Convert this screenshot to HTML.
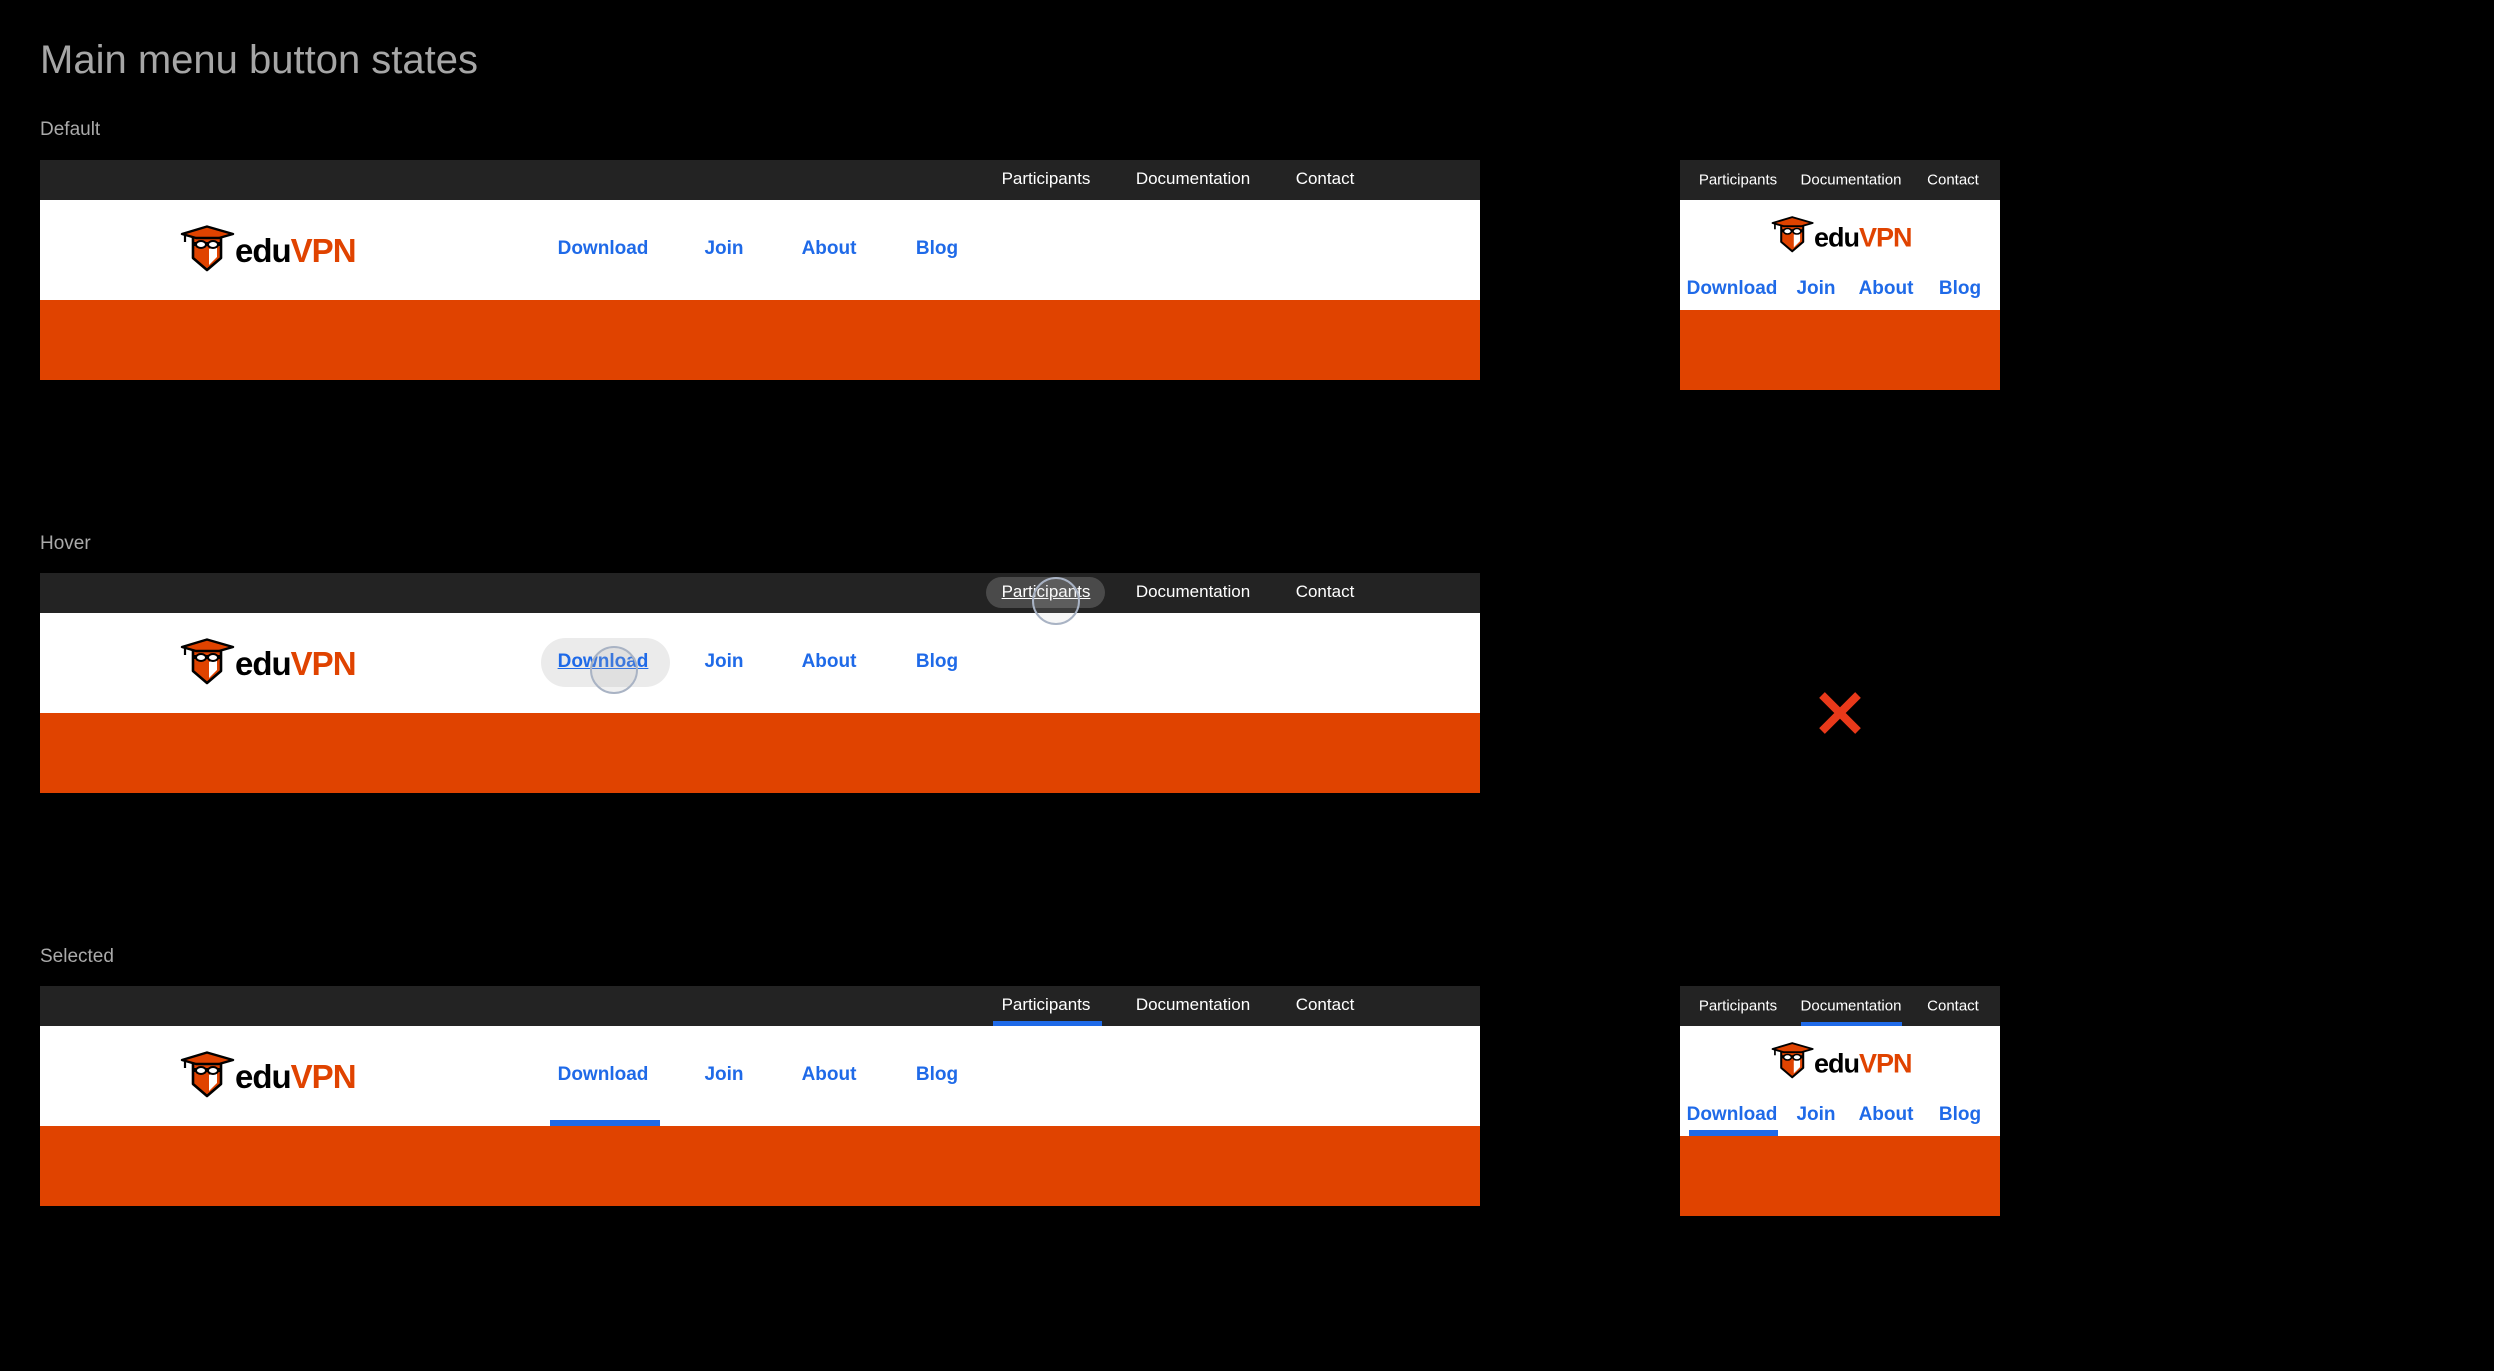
<!DOCTYPE html>
<html><head><meta charset="utf-8"><style>
*{margin:0;padding:0;box-sizing:border-box}
body{width:2494px;height:1371px;background:#000;position:relative;overflow:hidden;font-family:"Liberation Sans",sans-serif}
.a{position:absolute}
.t{position:absolute;transform:translate(-50%,-50%);white-space:nowrap}
.top{color:#fff;font-size:17px}
.nav{color:#1f6ae8;font-weight:bold;font-size:19px}
.lbl{color:#aaa;font-size:19px;left:40px}
.logo{position:absolute;width:56px;height:48px}
.word{position:absolute;font-weight:bold;font-size:33px;letter-spacing:-1px;transform:translateY(-50%)}
.word span{color:#e04300}
</style></head><body>
<svg width="0" height="0" style="position:absolute"><defs>
<g id="ic">
<path d="M13 11 L41 11 L41 33 L27 45 L13 33 Z" fill="#e04300" stroke="#000" stroke-width="2.6" stroke-linejoin="round"/>
<path d="M29 24 L37 21 L37 32 L29 40 Z" fill="#fff"/>
<path d="M2 9 L27 1.5 L53 9 L39 13 L16 13 Z" fill="#e04300" stroke="#000" stroke-width="2.4" stroke-linejoin="round"/>
<path d="M5 9 L5 17" stroke="#000" stroke-width="2.2"/>
<path d="M13 17 L41 17 L41 21 L13 21Z" fill="#000"/>
<ellipse cx="21" cy="19.5" rx="5" ry="3.5" fill="#fff" stroke="#000" stroke-width="2"/>
<ellipse cx="33" cy="19.5" rx="5" ry="3.5" fill="#fff" stroke="#000" stroke-width="2"/>
</g></defs></svg>

<div class="a" style="left:40px;top:38px;color:#a6a6a6;font-size:40px">Main menu button states</div>
<div class="a lbl" style="top:119px">Default</div>
<div class="a lbl" style="top:533px">Hover</div>
<div class="a lbl" style="top:946px">Selected</div>

<!-- Banner 1 -->
<div class="a" style="left:40px;top:160px;width:1440px;height:40px;background:#232323"></div>
<div class="a" style="left:40px;top:200px;width:1440px;height:100px;background:#fff"></div>
<div class="a" style="left:40px;top:300px;width:1440px;height:80px;background:#e04300"></div>
<div class="t top" style="left:1046px;top:179px">Participants</div>
<div class="t top" style="left:1193px;top:179px">Documentation</div>
<div class="t top" style="left:1325px;top:179px">Contact</div>
<svg class="logo" style="left:180px;top:224px" viewBox="0 0 56 46"><use href="#ic"/></svg>
<div class="word" style="left:235px;top:251px">edu<span>VPN</span></div>
<div class="t nav" style="left:603px;top:249px">Download</div>
<div class="t nav" style="left:724px;top:249px">Join</div>
<div class="t nav" style="left:829px;top:249px">About</div>
<div class="t nav" style="left:937px;top:249px">Blog</div>

<!-- Banner 2 hover -->
<div class="a" style="left:40px;top:573px;width:1440px;height:40px;background:#232323"></div>
<div class="a" style="left:40px;top:613px;width:1440px;height:100px;background:#fff"></div>
<div class="a" style="left:40px;top:713px;width:1440px;height:80px;background:#e04300"></div>
<div class="a" style="left:986px;top:577px;width:119px;height:31px;border-radius:16px;background:#4a4a4a"></div>
<div class="a" style="left:541px;top:638px;width:129px;height:49px;border-radius:25px;background:#ebebeb"></div>
<div class="t top" style="left:1046px;top:592px;text-decoration:underline">Participants</div>
<div class="t top" style="left:1193px;top:592px">Documentation</div>
<div class="t top" style="left:1325px;top:592px">Contact</div>
<svg class="logo" style="left:180px;top:637px" viewBox="0 0 56 46"><use href="#ic"/></svg>
<div class="word" style="left:235px;top:664px">edu<span>VPN</span></div>
<div class="t nav" style="left:603px;top:662px;text-decoration:underline">Download</div>
<div class="t nav" style="left:724px;top:662px">Join</div>
<div class="t nav" style="left:829px;top:662px">About</div>
<div class="t nav" style="left:937px;top:662px">Blog</div>
<div class="a" style="left:1032px;top:577px;width:48px;height:48px;border-radius:50%;border:2px solid #a9b3c4;background:rgba(200,200,200,0.15)"></div>
<div class="a" style="left:590px;top:646px;width:48px;height:48px;border-radius:50%;border:2px solid #a9b3c4;background:rgba(180,180,180,0.2)"></div>
<svg class="a" style="left:1818px;top:691px" width="44" height="44" viewBox="0 0 44 44"><path d="M4 4 L40 40 M40 4 L4 40" stroke="#e8391a" stroke-width="8"/></svg>

<!-- Banner 3 selected -->
<div class="a" style="left:40px;top:986px;width:1440px;height:40px;background:#232323"></div>
<div class="a" style="left:40px;top:1026px;width:1440px;height:100px;background:#fff"></div>
<div class="a" style="left:40px;top:1126px;width:1440px;height:80px;background:#e04300"></div>
<div class="a" style="left:993px;top:1021px;width:109px;height:5px;background:#1f6ae8"></div>
<div class="a" style="left:550px;top:1120px;width:110px;height:6px;background:#1f6ae8"></div>
<div class="t top" style="left:1046px;top:1005px">Participants</div>
<div class="t top" style="left:1193px;top:1005px">Documentation</div>
<div class="t top" style="left:1325px;top:1005px">Contact</div>
<svg class="logo" style="left:180px;top:1050px" viewBox="0 0 56 46"><use href="#ic"/></svg>
<div class="word" style="left:235px;top:1077px">edu<span>VPN</span></div>
<div class="t nav" style="left:603px;top:1075px">Download</div>
<div class="t nav" style="left:724px;top:1075px">Join</div>
<div class="t nav" style="left:829px;top:1075px">About</div>
<div class="t nav" style="left:937px;top:1075px">Blog</div>

<!-- Mobile 1 -->
<div class="a" style="left:1680px;top:160px;width:320px;height:40px;background:#232323"></div>
<div class="a" style="left:1680px;top:200px;width:320px;height:110px;background:#fff"></div>
<div class="a" style="left:1680px;top:310px;width:320px;height:80px;background:#e04300"></div>
<div class="t top" style="left:1738px;top:180px;font-size:15px">Participants</div>
<div class="t top" style="left:1851px;top:180px;font-size:15px">Documentation</div>
<div class="t top" style="left:1953px;top:180px;font-size:15px">Contact</div>
<svg class="logo" style="left:1771px;top:215px;width:44px;height:38px" viewBox="0 0 56 46"><use href="#ic"/></svg>
<div class="word" style="left:1814px;top:238px;font-size:27px">edu<span>VPN</span></div>
<div class="t nav" style="left:1732px;top:289px">Download</div>
<div class="t nav" style="left:1816px;top:289px">Join</div>
<div class="t nav" style="left:1886px;top:289px">About</div>
<div class="t nav" style="left:1960px;top:289px">Blog</div>

<!-- Mobile 2 -->
<div class="a" style="left:1680px;top:986px;width:320px;height:40px;background:#232323"></div>
<div class="a" style="left:1680px;top:1026px;width:320px;height:110px;background:#fff"></div>
<div class="a" style="left:1680px;top:1136px;width:320px;height:80px;background:#e04300"></div>
<div class="a" style="left:1801px;top:1022px;width:101px;height:4px;background:#1f6ae8"></div>
<div class="a" style="left:1689px;top:1130px;width:89px;height:6px;background:#1f6ae8"></div>
<div class="t top" style="left:1738px;top:1006px;font-size:15px">Participants</div>
<div class="t top" style="left:1851px;top:1006px;font-size:15px">Documentation</div>
<div class="t top" style="left:1953px;top:1006px;font-size:15px">Contact</div>
<svg class="logo" style="left:1771px;top:1041px;width:44px;height:38px" viewBox="0 0 56 46"><use href="#ic"/></svg>
<div class="word" style="left:1814px;top:1064px;font-size:27px">edu<span>VPN</span></div>
<div class="t nav" style="left:1732px;top:1115px">Download</div>
<div class="t nav" style="left:1816px;top:1115px">Join</div>
<div class="t nav" style="left:1886px;top:1115px">About</div>
<div class="t nav" style="left:1960px;top:1115px">Blog</div>
</body></html>
